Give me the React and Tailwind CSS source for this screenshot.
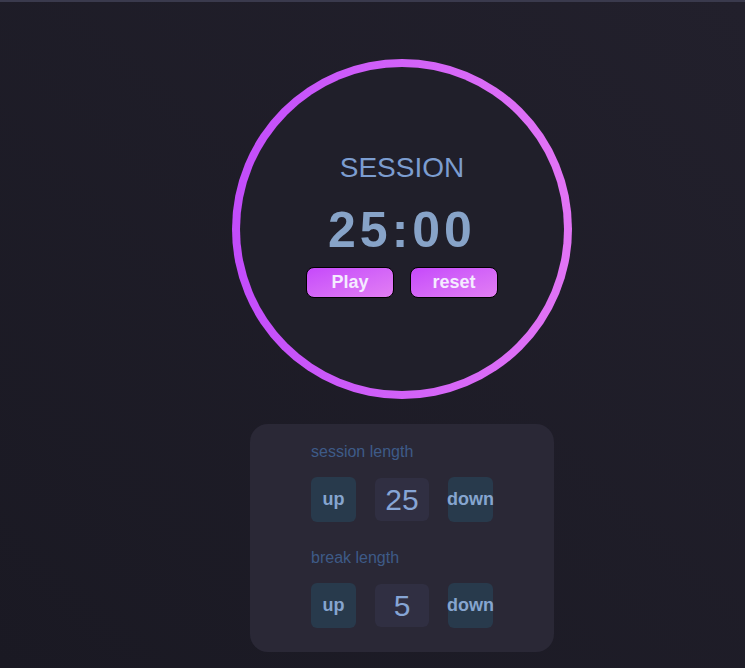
export default function App() {
  const rows = [
    { label: 'session length', value: 25 },
    { label: 'break length', value: 5 },
  ]

  return (
    <div className="min-h-screen w-full border-t-2 border-[#3a3a4d] bg-linear-to-tr from-[#1a1923] to-[#22202c] font-['Liberation_Sans',Arial,sans-serif] flex flex-col items-center pl-[59px]">
      {/* timer ring */}
      <div className="mt-[57px] w-[340px] h-[340px] rounded-full p-[8px] bg-linear-to-r from-[#c24cfb] to-[#e274f5]">
        <div className="w-full h-full rounded-full bg-[#201f2a] flex flex-col items-center pt-[85px]">
          <h2 className="text-[28px] leading-[31px] text-[#7c9dd0]">SESSION</h2>
          <div className="mt-[19px] text-[50px] leading-[56px] font-bold tracking-[4px] text-[#87a3c8]">25:00</div>
          <div className="mt-[9px] flex gap-4">
            <button className="w-[88px] h-[31px] rounded-lg border border-black bg-linear-to-br from-[#c648fb] to-[#e27ef3] text-[18px] font-bold text-[#f4ecff]">
              Play
            </button>
            <button className="w-[88px] h-[31px] rounded-lg border border-black bg-linear-to-br from-[#c648fb] to-[#e27ef3] text-[18px] font-bold text-[#f4ecff]">
              reset
            </button>
          </div>
        </div>
      </div>

      {/* length controls */}
      <div className="mt-[25px] w-[304px] rounded-[18px] bg-[#2a2836] pl-[61px] pr-[61px] pt-[19px] pb-[24px]">
        {rows.map((row, i) => (
          <div key={row.label} className={i > 0 ? 'mt-[27px]' : ''}>
            <p className="text-[16px] leading-[18px] text-[#3e5b88]">{row.label}</p>
            <div className="mt-[16px] flex items-center gap-[19px]">
              <button className="w-[45px] h-[45px] rounded-md bg-[#283a4c] text-[18px] font-bold text-[#86a5cf] flex items-center justify-center">
                up
              </button>
              <div className="w-[54px] h-[43px] rounded-md bg-[#302f42] text-[30px] text-[#86a5d5] flex items-center justify-center">
                {row.value}
              </div>
              <button className="w-[45px] h-[45px] rounded-md bg-[#283a4c] text-[18px] font-bold text-[#86a5cf] flex items-center justify-center px-0 whitespace-nowrap">
                down
              </button>
            </div>
          </div>
        ))}
      </div>
    </div>
  )
}
